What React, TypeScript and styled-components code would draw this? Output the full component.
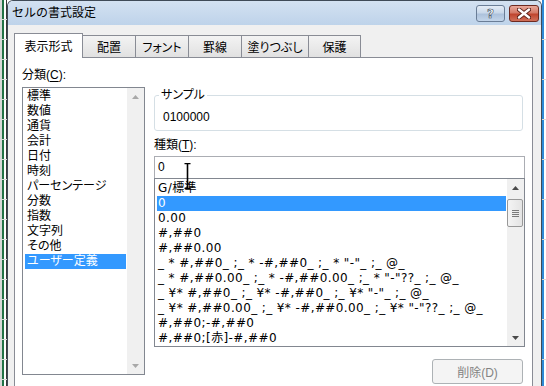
import React from "react";
import styled, { createGlobalStyle, css } from "styled-components";

const GlobalStyle = createGlobalStyle`
  html, body { margin: 0; padding: 0; }
  body {
    width: 546px;
    height: 386px;
    overflow: hidden;
    background: #ffffff;
    font-family: "Liberation Sans", "Noto Sans CJK JP", sans-serif;
    font-size: 12px;
    color: #000;
    font-feature-settings: "palt";
  }
  * { box-sizing: border-box; }
`;

const Page = styled.div`
  display: flex;
  width: 546px;
  height: 386px;
  overflow: hidden;
`;

const LeftStrip = styled.div`
  flex: none;
  width: 7px;
  background:
    repeating-linear-gradient(to bottom, transparent 0 19px, #d9d9d9 19px 20px),
    linear-gradient(to right, #d8d8d8 0 2px, #217346 2px 4px, #ffffff 4px 6px, #3a3a3a 6px 7px);
`;

const RightStrip = styled.div`
  flex: none;
  width: 4px;
  background:
    repeating-linear-gradient(to bottom, transparent 0 39px, #d9d9d9 39px 40px),
    linear-gradient(to right, #2f8ad6 0 2px, #ffffff 2px 4px);
`;

const Dialog = styled.div`
  flex: none;
  width: 535px;
  display: flex;
  flex-direction: column;
  border: 1px solid #3f4a57;
  border-bottom: none;
  border-radius: 6px 6px 0 0;
  background: #f0f0f0;
  overflow: hidden;
`;

const TitleBar = styled.div`
  flex: none;
  height: 24px;
  display: flex;
  align-items: center;
  padding: 0 2px 0 4px;
  background: linear-gradient(to bottom, #d3e1f1, #bed3ea);
`;

const TitleText = styled.span`
  font-size: 12px;
  line-height: 16px;
  font-feature-settings: normal;
  color: #000;
`;

const CaptionButtons = styled.div`
  margin-left: auto;
  align-self: flex-start;
  margin-top: 4px;
  display: flex;
  gap: 4px;
`;

const CaptionButton = styled.div<{ $close?: boolean }>`
  height: 17px;
  width: ${(p) => (p.$close ? 30 : 29)}px;
  border-radius: 3px;
  display: flex;
  align-items: center;
  justify-content: center;
  ${(p) =>
    p.$close
      ? css`
          border: 1px solid #6e2a20;
          background: linear-gradient(to bottom, #e9a99b 0%, #d47a68 45%, #c0452f 55%, #d0705a 100%);
        `
      : css`
          border: 1px solid #6a7d96;
          background: linear-gradient(to bottom, #e4ecf6 0%, #c9d8ea 45%, #adc2dc 55%, #c3d5ea 100%);
        `}
`;

const HelpGlyph = styled.span`
  font-family: "DejaVu Sans", sans-serif;
  font-weight: bold;
  font-size: 12px;
  line-height: 12px;
  color: #fff;
  -webkit-text-stroke: 0.6px #3b4a5e;
`;

const Body = styled.div`
  flex: 1;
  display: flex;
  flex-direction: column;
  padding: 8px 8px 0 6px;
  min-height: 0;
`;

const TabRow = styled.div`
  flex: none;
  display: flex;
  align-items: flex-end;
  height: 25px;
  margin-bottom: -1px;
  position: relative;
  z-index: 1;
`;

const Tab = styled.div<{ $w: number; $active?: boolean }>`
  width: ${(p) => p.$w}px;
  border: 1px solid #898c95;
  border-bottom: none;
  display: flex;
  align-items: center;
  justify-content: center;
  font-size: 12px;
  & + & { margin-left: -1px; }
  ${(p) =>
    p.$active
      ? css`
          height: 25px;
          padding-bottom: 2px;
          background: #ffffff;
          position: relative;
          z-index: 1;
        `
      : css`
          height: 22px;
          margin-bottom: 1px;
          background: linear-gradient(to bottom, #f3f3f3, #e1e1e1);
        `}
`;

const Panel = styled.div`
  flex: 1;
  display: flex;
  gap: 9px;
  border: 1px solid #898c95;
  border-bottom: none;
  background: #ffffff;
  padding: 10px 7px 0 7px;
`;

const LeftColumn = styled.div`
  flex: none;
  width: 123px;
  display: flex;
  flex-direction: column;
`;

const RightColumn = styled.div`
  flex: 1;
  display: flex;
  flex-direction: column;
  min-width: 0;
`;

const FieldLabel = styled.div<{ $top?: number }>`
  line-height: 15px;
  height: 15px;
  margin-top: ${(p) => p.$top ?? 0}px;
  margin-bottom: 4px;
`;

const Underlined = styled.span`
  text-decoration: underline;
  text-underline-offset: 2px;
`;

const ListBox = styled.div<{ $h: number }>`
  height: ${(p) => p.$h}px;
  border: 1px solid #828790;
  background: #ffffff;
  display: flex;
  flex: none;
`;

const Items = styled.div<{ $pt: number }>`
  flex: 1;
  min-width: 0;
  overflow: hidden;
  padding: ${(p) => p.$pt}px 1px 0 2px;
`;

const CategoryItem = styled.div<{ $sel?: boolean }>`
  height: 15px;
  line-height: 15px;
  padding-left: 2px;
  white-space: nowrap;
  background: ${(p) => (p.$sel ? "#3399ff" : "transparent")};
  color: ${(p) => (p.$sel ? "#ffffff" : "#000000")};
`;

const FormatItem = styled.div<{ $sel?: boolean }>`
  height: 15px;
  line-height: 15px;
  padding-left: 1px;
  white-space: nowrap;
  font-family: "DejaVu Sans", "Noto Sans CJK JP", sans-serif;
  font-size: 12px;
  letter-spacing: 0.4px;
  background: ${(p) => (p.$sel ? "#3399ff" : "transparent")};
  color: ${(p) => (p.$sel ? "#ffffff" : "#000000")};
`;

const ScrollBar = styled.div`
  flex: none;
  width: 17px;
  background: #f0f0f0;
  display: flex;
  flex-direction: column;
`;

const ArrowBox = styled.div<{ $end?: boolean }>`
  height: 17px;
  display: flex;
  align-items: center;
  justify-content: center;
  margin-top: ${(p) => (p.$end ? "auto" : "0")};
`;

const Thumb = styled.div`
  height: 28px;
  margin: 3px 1px 0 0;
  border: 1px solid #989898;
  border-radius: 2px;
  background: linear-gradient(to right, #f4f4f4, #e4e4e4);
  display: flex;
  flex-direction: column;
  align-items: center;
  justify-content: center;
  gap: 1px;
`;

const Grip = styled.div`
  width: 7px;
  height: 1px;
  background: #7a7a7a;
`;

const SampleBox = styled.fieldset`
  margin: 20px 2px 0 0;
  padding: 0 8px 5px 8px;
  border: 1px solid #d5dfe5;
  border-radius: 3px;
  min-width: 0;
`;

const Legend = styled.legend`
  padding: 0 2px;
  margin-left: -4px;
  line-height: 15px;
  height: 15px;
`;

const SampleValue = styled.div`
  margin-top: 7px;
  line-height: 15px;
`;

const TypeInputWrap = styled.div`
  margin-top: -1px;
`;

const TypeInput = styled.div`
  position: relative;
  height: 22px;
  border: 1px solid #abadb3;
  border-bottom: none;
  padding-left: 3px;
  line-height: 21px;
  background: #ffffff;
`;

const IBeam = styled.svg`
  position: absolute;
  left: 29px;
  top: 6px;
  z-index: 2;
`;

const DeleteButton = styled.button`
  align-self: flex-end;
  margin: 12px 2px 0 0;
  width: 91px;
  height: 25px;
  border: 1px solid #adb2b5;
  border-radius: 3px;
  background: #f4f4f4;
  color: #838383;
  font-family: inherit;
  font-size: 12px;
  font-feature-settings: "palt";
  padding: 0;
`;

const Triangle = ({ up, color }: { up?: boolean; color: string }) => (
  <svg width="7" height="4" viewBox="0 0 7 4">
    {up ? <path d="M0 4 L3.5 0 L7 4 Z" fill={color} /> : <path d="M0 0 L7 0 L3.5 4 Z" fill={color} />}
  </svg>
);

const tabs = [
  { label: "表示形式", w: 69, active: true },
  { label: "配置", w: 54 },
  { label: "フォント", w: 54 },
  { label: "罫線", w: 54 },
  { label: "塗りつぶし", w: 68 },
  { label: "保護", w: 53 },
];

const categories = [
  "標準",
  "数値",
  "通貨",
  "会計",
  "日付",
  "時刻",
  "パーセンテージ",
  "分数",
  "指数",
  "文字列",
  "その他",
  "ユーザー定義",
];

const formats = [
  "G/標準",
  "0",
  "0.00",
  "#,##0",
  "#,##0.00",
  '_ * #,##0_ ;_ * -#,##0_ ;_ * "-"_ ;_ @_',
  '_ * #,##0.00_ ;_ * -#,##0.00_ ;_ * "-"??_ ;_ @_',
  '_ ¥* #,##0_ ;_ ¥* -#,##0_ ;_ ¥* "-"_ ;_ @_',
  '_ ¥* #,##0.00_ ;_ ¥* -#,##0.00_ ;_ ¥* "-"??_ ;_ @_',
  "#,##0;-#,##0",
  "#,##0;[赤]-#,##0",
];

export default function App() {
  return (
    <Page>
      <GlobalStyle />
      <LeftStrip />
      <Dialog>
        <TitleBar>
          <TitleText>セルの書式設定</TitleText>
          <CaptionButtons>
            <CaptionButton>
              <HelpGlyph>?</HelpGlyph>
            </CaptionButton>
            <CaptionButton $close>
              <svg width="14" height="11" viewBox="0 0 14 11">
                <path
                  d="M2 1.5 L12 9.5 M12 1.5 L2 9.5"
                  stroke="#5a2018"
                  strokeWidth="4.2"
                  strokeLinecap="round"
                />
                <path
                  d="M2 1.5 L12 9.5 M12 1.5 L2 9.5"
                  stroke="#ffffff"
                  strokeWidth="2.4"
                  strokeLinecap="round"
                />
              </svg>
            </CaptionButton>
          </CaptionButtons>
        </TitleBar>
        <Body>
          <TabRow>
            {tabs.map((t) => (
              <Tab key={t.label} $w={t.w} $active={t.active}>
                {t.label}
              </Tab>
            ))}
          </TabRow>
          <Panel>
            <LeftColumn>
              <FieldLabel>
                分類(<Underlined>C</Underlined>):
              </FieldLabel>
              <ListBox $h={288}>
                <Items $pt={1}>
                  {categories.map((c) => (
                    <CategoryItem key={c} $sel={c === "ユーザー定義"}>
                      {c}
                    </CategoryItem>
                  ))}
                </Items>
                <ScrollBar>
                  <ArrowBox>
                    <Triangle up color="#a8a8a8" />
                  </ArrowBox>
                  <ArrowBox $end>
                    <Triangle color="#a8a8a8" />
                  </ArrowBox>
                </ScrollBar>
              </ListBox>
            </LeftColumn>
            <RightColumn>
              <SampleBox>
                <Legend>サンプル</Legend>
                <SampleValue>0100000</SampleValue>
              </SampleBox>
              <FieldLabel $top={7}>
                種類(<Underlined>T</Underlined>):
              </FieldLabel>
              <TypeInputWrap>
                <TypeInput>
                  0
                  <IBeam width="7" height="26" viewBox="0 0 7 26">
                    <path d="M0.5 0.5 H6.5 M3.5 0.5 V25.5 M0.5 25.5 H6.5" stroke="#000" strokeWidth="1.6" fill="none" />
                  </IBeam>
                </TypeInput>
              </TypeInputWrap>
              <ListBox $h={169}>
                <Items $pt={2}>
                  {formats.map((f) => (
                    <FormatItem key={f} $sel={f === "0"}>
                      {f}
                    </FormatItem>
                  ))}
                </Items>
                <ScrollBar>
                  <ArrowBox>
                    <Triangle up color="#4a4a4a" />
                  </ArrowBox>
                  <Thumb>
                    <Grip />
                    <Grip />
                    <Grip />
                    <Grip />
                  </Thumb>
                  <ArrowBox $end>
                    <Triangle color="#4a4a4a" />
                  </ArrowBox>
                </ScrollBar>
              </ListBox>
              <DeleteButton disabled>削除(D)</DeleteButton>
            </RightColumn>
          </Panel>
        </Body>
      </Dialog>
      <RightStrip />
    </Page>
  );
}
